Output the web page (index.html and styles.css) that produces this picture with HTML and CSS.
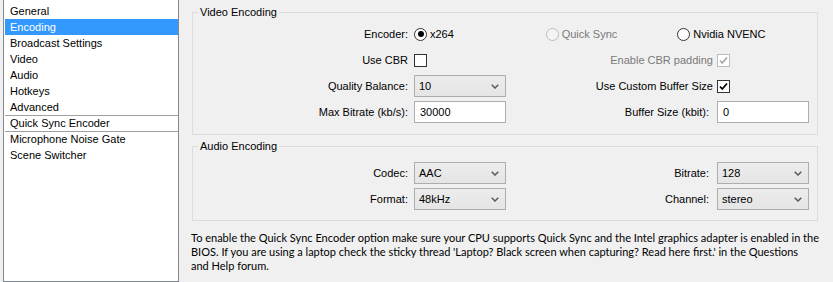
FILE: index.html
```html
<!DOCTYPE html>
<html lang="en"><head><meta charset="UTF-8">
  <title>Settings - Encoding</title>
<link rel="stylesheet" href="styles.css"></head>

<body>
<ul class="nav">
  <li>General</li>
  <li class="active">Encoding</li>
  <li>Broadcast Settings</li>
  <li>Video</li>
  <li>Audio</li>
  <li>Hotkeys</li>
  <li>Advanced</li>
  <li class="sep">Quick Sync Encoder</li>
  <li class="sep">Microphone Noise Gate</li>
  <li>Scene Switcher</li>
</ul>

<div class="panel">
  <fieldset class="group">
    <legend>Video Encoding</legend>
    <div class="grid">
      <span class="lbl">Encoder:</span>
      <div class="radios">
        <span class="opt"><span class="radio on"></span>x264</span>
        <span class="opt dis"><span class="radio"></span>Quick Sync</span>
        <span class="opt"><span class="radio"></span>Nvidia NVENC</span>
      </div>

      <span class="lbl">Use CBR</span>
      <span class="check"></span>
      <span class="lbl lbl-check dis">Enable CBR padding</span>
      <span class="check dis"><svg viewBox="0 0 11 11"><path d="M2 5.5 L4.3 8 L9 2.5"/></svg></span>

      <span class="lbl">Quality Balance:</span>
      <div class="combo"><span>10</span><svg viewBox="0 0 8 5"><path d="M0.7 0.7 L4 4 L7.3 0.7"/></svg></div>
      <span class="lbl lbl-check">Use Custom Buffer Size</span>
      <span class="check"><svg viewBox="0 0 11 11"><path d="M2 5.5 L4.3 8 L9 2.5"/></svg></span>

      <span class="lbl">Max Bitrate (kb/s):</span>
      <span class="field">30000</span>
      <span class="lbl lbl-right">Buffer Size (kbit):</span>
      <span class="field">0</span>
    </div>
  </fieldset>

  <fieldset class="group audio">
    <legend>Audio Encoding</legend>
    <div class="grid">
      <span class="lbl">Codec:</span>
      <div class="combo"><span>AAC</span><svg viewBox="0 0 8 5"><path d="M0.7 0.7 L4 4 L7.3 0.7"/></svg></div>
      <span class="lbl lbl-right">Bitrate:</span>
      <div class="combo"><span>128</span><svg viewBox="0 0 8 5"><path d="M0.7 0.7 L4 4 L7.3 0.7"/></svg></div>

      <span class="lbl">Format:</span>
      <div class="combo"><span>48kHz</span><svg viewBox="0 0 8 5"><path d="M0.7 0.7 L4 4 L7.3 0.7"/></svg></div>
      <span class="lbl lbl-right">Channel:</span>
      <div class="combo"><span>stereo</span><svg viewBox="0 0 8 5"><path d="M0.7 0.7 L4 4 L7.3 0.7"/></svg></div>
    </div>
  </fieldset>

  <p class="note">To enable the Quick Sync Encoder option make sure your CPU supports Quick Sync and the Intel graphics adapter is enabled in the BIOS. If you are using a laptop check the sticky thread 'Laptop? Black screen when capturing? Read here first.' in the Questions <span class="nw">and Help</span> forum.</p>
</div>
</body></html>
```

FILE: styles.css
```css
*{
  box-sizing: border-box;
}
html,body{
  margin: 0;
  padding: 0;
  height: 282px;
  overflow: hidden;
}
body{
  display: flex;
  background: #f0f0f0;
  color: #000;
  font: 11px "Liberation Sans", Arial, sans-serif;
}

/* left list */
.nav{
  list-style: none;
  width: 176px;
  margin: 0 0 0 3px;
  padding: 3px 0 0 1px;
  background: #fff;
  border: 1px solid #828790;
  border-top: 0;
}
.nav li{
  height: 16px;
  line-height: 16px;
  padding-left: 5px;
  white-space: nowrap;
}
.nav .active{
  background: #3399ff;
  color: #fff;
}
.nav .sep{
  border-top: 1px solid #a0a0a0;
  line-height: 15px;
}

/* right side */
.panel{
  flex: 1;
  padding: 5px 15px 0 13px;
}
.group{
  margin: 0;
  min-width: 0;
  padding: 4px 0 11px;
  border: 1px solid #dcdcdc;
}
.group legend{
  margin-left: 5px;
  padding: 0 2px;
  line-height: 14px;
}
.audio{
  margin-top: 4px;
  padding-top: 9px;
  padding-bottom: 10px;
}
.grid{
  display: grid;
  grid-template-columns: 221px 92px 211px 92px;
  grid-auto-rows: 22px;
  row-gap: 4px;
}
.lbl{
  justify-self: end;
  align-self: center;
  padding-right: 6px;
  white-space: nowrap;
}
.lbl-right{ padding-right: 8px; }
.lbl-check{ padding-right: 4px; }
.dis{ color: #7a7a7a; }

.radios{
  grid-column: 2 / 5;
  display: flex;
  align-items: center;
}
.opt{
  width: 132px;
  display: flex;
  align-items: center;
  gap: 3px;
}
.radio{
  position: relative;
  width: 13px;
  height: 13px;
  border: 1px solid #333;
  border-radius: 50%;
  background: #fff;
}
.radio.on::after{
  content: "";
  position: absolute;
  left: 2.5px;
  top: 2.5px;
  width: 6px;
  height: 6px;
  border-radius: 50%;
  background: #000;
}
.opt.dis .radio{
  border-color: #bcbcbc;
  background: #f4f4f4;
}

.check{
  align-self: center;
  width: 13px;
  height: 13px;
  border: 1px solid #333;
  background: #fff;
  display: flex;
}
.check svg{
  width: 11px;
  height: 11px;
  fill: none;
  stroke: #000;
  stroke-width: 1.7;
}
.check.dis{
  border-color: #bcbcbc;
}
.check.dis svg{ stroke: #a8a8a8; }

.combo{
  display: flex;
  align-items: center;
  justify-content: space-between;
  border: 1px solid #adadad;
  background: linear-gradient(#ececec, #e5e5e5);
  padding: 0 6px 0 4px;
}
.combo svg{
  width: 8px;
  height: 5px;
  fill: none;
  stroke: #5a5a5a;
  stroke-width: 1.5;
}
.field{
  border: 1px solid #abadb3;
  background: #fff;
  padding-left: 5px;
  line-height: 20px;
}

.note{
  margin: 10px -3px 0 -1px;
  font-family: Lato, "Liberation Sans", sans-serif;
  line-height: 14px;
}
.nw{ white-space: nowrap; }
```
